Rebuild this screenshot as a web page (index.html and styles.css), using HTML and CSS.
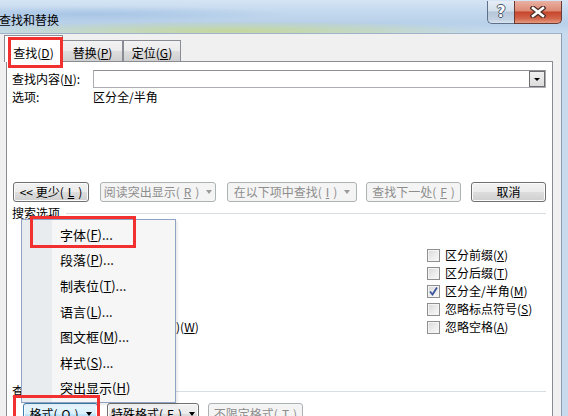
FILE: index.html
```html
<!DOCTYPE html>
<html>
<head>
    <meta charset="utf-8">
    <title>查找和替换</title>
    <link rel="stylesheet" href="styles.css">
</head>
<body>
<div class="window">
    <div class="titlebar">
        <span class="title">查找和替换</span>
        <div class="caption">
            <span class="cap-btn cap-help">?</span>
            <span class="cap-btn cap-close">
                <svg width="16" height="12" viewBox="0 0 16 12">
                    <path d="M3 2 L13 10 M13 2 L3 10" stroke="#4a2b27" stroke-width="5" stroke-linecap="square"/>
                    <path d="M3 2 L13 10 M13 2 L3 10" stroke="#fff" stroke-width="2.6" stroke-linecap="square"/>
                </svg>
            </span>
        </div>
    </div>

    <div class="client">
        <div class="tabs">
            <div class="tab tab-active">查找(<u>D</u>)</div>
            <div class="tab tab-1">替换(<u>P</u>)</div>
            <div class="tab tab-2">定位(<u>G</u>)</div>
        </div>

        <div class="panel">
            <div class="find-row">
                <span class="row-label">查找内容(<u>N</u>):</span>
                <div class="combo"><span class="combo-btn"></span></div>
            </div>
            <div class="opt-row">
                <span class="row-label">选项:</span>
                <span>区分全/半角</span>
            </div>

            <div class="btn-row">
                <span class="btn btn-less">&lt;&lt; 更少(<u>L</u>)</span>
                <span class="btn btn-read disabled">阅读突出显示(<u>R</u>) <i class="caret"></i></span>
                <span class="btn btn-in disabled">在以下项中查找(<u>I</u>) <i class="caret"></i></span>
                <span class="btn btn-next disabled">查找下一处(<u>F</u>)</span>
                <span class="btn btn-cancel">取消</span>
            </div>

            <div class="group-label">搜索选项</div>

            <div class="options">
                <div class="opt-col opt-left">
                    <div class="check"><span class="box"></span>区分大小写(<u>H</u>)</div>
                    <div class="check"><span class="box"></span>全字匹配(<u>Y</u>)</div>
                    <div class="check"><span class="box"></span>使用通配符(<u>U</u>)</div>
                    <div class="check"><span class="box"></span>同音(英文)(<u>K</u>)</div>
                    <div class="check"><span class="box"></span>查找单词的所有形式(英文)(<u>W</u>)</div>
                </div>
                <div class="opt-col">
                    <div class="check"><span class="box"></span>区分前缀(<u>X</u>)</div>
                    <div class="check"><span class="box"></span>区分后缀(<u>T</u>)</div>
                    <div class="check"><span class="box checked">
                        <svg width="11" height="11" viewBox="0 0 11 11"><path d="M2 5.5 L4.5 8.5 L9 1.5" fill="none" stroke="#3a549c" stroke-width="1.8"/></svg>
                    </span>区分全/半角(<u>M</u>)</div>
                    <div class="check"><span class="box"></span>忽略标点符号(<u>S</u>)</div>
                    <div class="check"><span class="box"></span>忽略空格(<u>A</u>)</div>
                </div>
            </div>

            <div class="group-label group-find">查找</div>

            <div class="btn-row bottom-row">
                <span class="btn btn-format hot">格式(<u>O</u>) <i class="caret"></i></span>
                <span class="btn btn-special">特殊格式(<u>E</u>) <i class="caret"></i></span>
                <span class="btn btn-noformat disabled">不限定格式(<u>T</u>)</span>
            </div>
        </div>
    </div>

    <!-- format dropdown menu -->
    <ul class="menu">
        <li>字体(<u>F</u>)...</li>
        <li>段落(<u>P</u>)...</li>
        <li>制表位(<u>T</u>)...</li>
        <li>语言(<u>L</u>)...</li>
        <li>图文框(<u>M</u>)...</li>
        <li>样式(<u>S</u>)...</li>
        <li>突出显示(<u>H</u>)</li>
    </ul>

    <!-- red highlight marks -->
    <div class="mark mark-tab"></div>
    <div class="mark mark-font"></div>
    <div class="mark mark-format"></div>
</div>
</body>
</html>
```

FILE: styles.css
```css
* { box-sizing: border-box; }
html, body { margin: 0; padding: 0; }
body { width: 568px; height: 416px; overflow: hidden; font-family: "Noto Sans CJK SC", "Liberation Sans", sans-serif; font-size: 12px; line-height: 14px; color: #000; }
u { text-decoration: underline; text-underline-offset: 1px; }

.window { position: relative; height: 416px; display: flex; flex-direction: column; background: #c8dbee; }

/* title bar */
.titlebar { height: 33px; flex: none; display: flex; align-items: flex-start;
    background:
        radial-gradient(ellipse 260px 10px at 230px 31px, rgba(196, 214, 128, 0.75), rgba(196, 214, 128, 0) 100%),
        radial-gradient(ellipse 200px 8px at 90px 14px, rgba(150, 185, 225, 0.6), rgba(150, 185, 225, 0) 100%),
        linear-gradient(#d4e4f4 0%, #c4d9ee 35%, #b8d0e9 70%, #c6dbee 100%); }
.title { padding-top: 13px; margin-left: -1px; color: #000; }
.caption { margin-left: auto; margin-right: 6px; margin-top: 1px; display: flex; height: 23px; }
.cap-btn { display: flex; align-items: center; justify-content: center; height: 23px; border: 1px solid #5f708a; border-top: none; }
.cap-help { width: 27px; border-right: none; border-bottom-left-radius: 5px; font: bold 15px "DejaVu Sans", sans-serif; color: #fff;
    text-shadow: 1px 0 #48556a, -1px 0 #48556a, 0 1px #48556a, 0 -1px #48556a;
    background: linear-gradient(#e6edf5 0%, #d3dfeb 45%, #b6c6d9 50%, #c3d2e3 85%, #d9e4ef 100%); }
.cap-close { width: 48px; border-color: #6b3a33; border-bottom-right-radius: 5px;
    background: linear-gradient(#eab1a2 0%, #dc8a74 45%, #c6452b 50%, #d2664b 80%, #e39a82 100%); }

/* client area */
.client { flex: 1; display: flex; flex-direction: column; margin-right: 6px; padding: 1px 0 0 4px; overflow: hidden;
    background: #f0f0f0; border-top: 1px solid #9fb2c8; border-right: 1px solid #8b9db3; }

.tabs { display: flex; align-items: flex-end; height: 27px; margin-bottom: -1px; position: relative; z-index: 1; }
.tab { height: 21px; margin-bottom: 1px; padding-top: 5px; text-align: center; border: 1px solid #898c95; border-bottom: none;
    background: linear-gradient(#f2f2f2 0%, #ebebeb 50%, #dddddd 51%, #cfcfcf 100%); }
.tab-active { width: 59px; height: 27px; margin-bottom: 0; padding-top: 10px; background: #fff; }
.tab-1 { width: 60px; border-left: none; }
.tab-2 { width: 58px; border-left: 1px solid #898c95; }

.panel { flex: 1; width: 547px; margin-left: 2px; padding: 8px 6px 0 5px; background: #fff; border: 1px solid #898c95; border-bottom: none; }

.find-row { display: flex; align-items: center; height: 18px; }
.row-label { width: 81px; flex: none; }
.combo { flex: 1; height: 18px; display: flex; justify-content: flex-end; border: 1px solid #abadb3; border-top-color: #8e9095; background: #fff; }
.combo-btn { width: 16px; height: 16px; position: relative; border: 1px solid #6d6d6d;
    background: linear-gradient(#f0f0f0, #dcdcdc); }
.combo-btn::after { content: ""; position: absolute; left: 4px; top: 6px; border: 3px solid transparent; border-top: 3px solid #000; border-bottom: none; width: 0; height: 0; border-left-width: 3.5px; border-right-width: 3.5px; }
.opt-row { display: flex; height: 14px; margin-top: 2px; }

/* buttons */
.btn-row { display: flex; height: 20px; margin-top: 78px; }
.btn { height: 20px; display: flex; align-items: center; justify-content: center; gap: 4px; white-space: nowrap;
    border: 1px solid #707070; border-radius: 3px; box-shadow: inset 0 0 0 1px #fbfbfb;
    background: linear-gradient(#f2f2f2 0%, #ebebeb 50%, #dddddd 51%, #cfcfcf 100%); }
.btn.disabled { color: #8d8d8d; border-color: #adb2b5; background: #f4f4f4; box-shadow: none; }
.btn.hot { border-color: #3c7fb1; box-shadow: inset 0 0 0 1px #f4fbfe;
    background: linear-gradient(#eaf6fd 0%, #d9f0fc 50%, #bee6fd 51%, #a7d9f5 100%); }
.caret { display: inline-block; width: 0; height: 0; margin-left: 3px; border-left: 3.5px solid transparent; border-right: 3.5px solid transparent; border-top: 4px solid #000; }
.disabled .caret { border-top-color: #9a9a9a; }

.btn-less { width: 76px; margin-left: 1px; }
.btn-read { width: 116px; margin-left: 11px; }
.btn-in { width: 130px; margin-left: 11px; }
.btn-next { width: 95px; margin-left: 9px; }
.btn-cancel { width: 75px; margin-left: 10px; }

.group-label { display: flex; align-items: center; height: 14px; margin-top: 4px; }
.group-label::after { content: ""; flex: 1; margin-left: 6px; border-top: 1px solid #d5dfe5; }
.group-find { margin-top: 48px; }

.options { display: grid; grid-template-columns: 415px 1fr; margin-top: 26px; }
.opt-left { padding-left: 10px; }
.check { display: flex; align-items: center; height: 18px; white-space: nowrap; }
.box { width: 13px; height: 13px; flex: none; margin-right: 5px; display: flex; align-items: center; justify-content: center;
    border: 1px solid #8e8f8f; box-shadow: inset 0 0 0 1px #f4f4f4;
    background: linear-gradient(135deg, #d8d8d8 0%, #eeeeee 60%, #fafafa 100%); }

.bottom-row { margin-top: 5px; height: 22px; }
.bottom-row .btn { height: 22px; }
.btn-format { width: 75px; margin-left: 11px; }
.btn-special { width: 92px; margin-left: 9px; }
.btn-noformat { width: 95px; margin-left: 9px; }

/* dropdown menu */
.menu { position: absolute; left: 21px; top: 219px; width: 155px; margin: 0; padding: 2px 0 1px; list-style: none; z-index: 5;
    border: 1px solid #8fa3c2; font-size: 13px; line-height: 16px;
    background: linear-gradient(to right, #e8ecef 30px, #f6f6f6 30px); box-shadow: 2px 2px 2px rgba(0, 0, 0, 0.08); }
.menu li { height: 25.6px; display: flex; align-items: center; padding-left: 38px; }

/* red highlight marks */
.mark { position: absolute; border: 3px solid #f2302f; z-index: 10; }
.mark-tab { left: 8px; top: 37px; width: 55px; height: 31px; }
.mark-font { left: 30px; top: 216px; width: 106px; height: 32px; }
.mark-format { left: 13px; top: 395px; width: 87px; height: 30px; }
```
